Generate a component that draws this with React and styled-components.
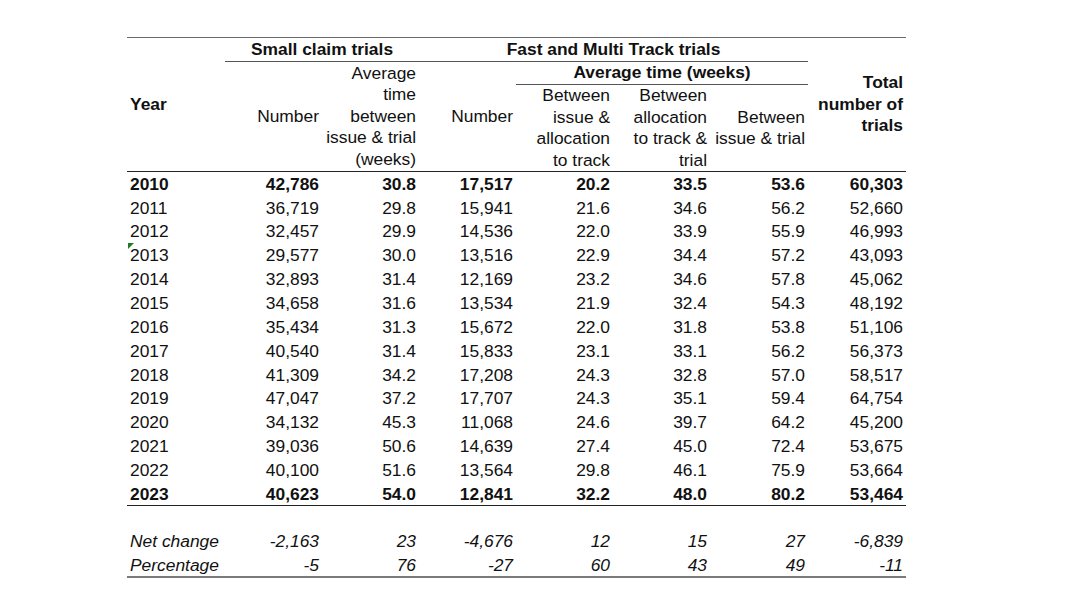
import React from 'react';
import styled, { createGlobalStyle, css } from 'styled-components';

const GlobalStyle = createGlobalStyle`
  html, body {
    margin: 0;
    padding: 0;
    background: #fff;
  }
  body {
    font-family: "Liberation Sans", Arial, sans-serif;
    color: #111;
  }
`;

const rows = [
  ['2010', '42,786', '30.8', '17,517', '20.2', '33.5', '53.6', '60,303'],
  ['2011', '36,719', '29.8', '15,941', '21.6', '34.6', '56.2', '52,660'],
  ['2012', '32,457', '29.9', '14,536', '22.0', '33.9', '55.9', '46,993'],
  ['2013', '29,577', '30.0', '13,516', '22.9', '34.4', '57.2', '43,093'],
  ['2014', '32,893', '31.4', '12,169', '23.2', '34.6', '57.8', '45,062'],
  ['2015', '34,658', '31.6', '13,534', '21.9', '32.4', '54.3', '48,192'],
  ['2016', '35,434', '31.3', '15,672', '22.0', '31.8', '53.8', '51,106'],
  ['2017', '40,540', '31.4', '15,833', '23.1', '33.1', '56.2', '56,373'],
  ['2018', '41,309', '34.2', '17,208', '24.3', '32.8', '57.0', '58,517'],
  ['2019', '47,047', '37.2', '17,707', '24.3', '35.1', '59.4', '64,754'],
  ['2020', '34,132', '45.3', '11,068', '24.6', '39.7', '64.2', '45,200'],
  ['2021', '39,036', '50.6', '14,639', '27.4', '45.0', '72.4', '53,675'],
  ['2022', '40,100', '51.6', '13,564', '29.8', '46.1', '75.9', '53,664'],
  ['2023', '40,623', '54.0', '12,841', '32.2', '48.0', '80.2', '53,464'],
];

const changes = [
  ['Net change', '-2,163', '23', '-4,676', '12', '15', '27', '-6,839'],
  ['Percentage', '-5', '76', '-27', '60', '43', '49', '-11'],
];

const colWidths = [98, 97, 97, 97, 97, 97, 98, 98];

const Page = styled.div`
  padding: 37px 0 0 127px;
`;

const Table = styled.table`
  width: 779px;
  table-layout: fixed;
  border-collapse: collapse;
  border-top: 1px solid #6a6a6a;
  border-bottom: 2px solid #7a7a7a;
  font-size: 17.4px;
`;

const Head = styled.thead`
  border-bottom: 1px solid #222;
`;

const HeadRow = styled.tr`
  height: ${(p) => p.$h}px;
`;

const HeadCell = styled.th`
  padding: 0 3px;
  font-weight: ${(p) => (p.$bold ? 700 : 400)};
  text-align: ${(p) => p.$align || 'right'};
  vertical-align: middle;
  line-height: 21.6px;
  white-space: nowrap;
  ${(p) =>
    p.$underline &&
    css`
      border-bottom: 1px solid #555;
    `}
`;

const Row = styled.tr`
  height: 23.85px;
  font-weight: ${(p) => (p.$bold ? 700 : 400)};
  font-style: ${(p) => (p.$italic ? 'italic' : 'normal')};
  ${(p) =>
    p.$rule &&
    css`
      border-bottom: 1px solid #222;
    `}
`;

const Cell = styled.td`
  padding: 0 3px;
  text-align: right;
  vertical-align: middle;
  line-height: 20px;
  white-space: nowrap;
`;

const LabelCell = styled(Cell)`
  position: relative;
  text-align: left;
  ${(p) =>
    p.$marker &&
    css`
      &::before {
        content: '';
        position: absolute;
        left: 1px;
        top: 0;
        border-top: 6px solid #1a7f24;
        border-right: 6px solid transparent;
      }
    `}
`;

export default function App() {
  return (
    <>
      <GlobalStyle />
      <Page>
        <Table>
          <colgroup>
            {colWidths.map((w, i) => (
              <col key={i} style={{ width: w }} />
            ))}
          </colgroup>
          <Head>
            <HeadRow $h={24}>
              <HeadCell rowSpan={3} $bold $align="left">Year</HeadCell>
              <HeadCell colSpan={2} $bold $align="center" $underline>
                Small claim trials
              </HeadCell>
              <HeadCell colSpan={4} $bold $align="center" $underline>
                Fast and Multi Track trials
              </HeadCell>
              <HeadCell rowSpan={3} $bold>
                Total
                <br />
                number of
                <br />
                trials
              </HeadCell>
            </HeadRow>
            <HeadRow $h={23}>
              <HeadCell rowSpan={2}>Number</HeadCell>
              <HeadCell rowSpan={2}>
                Average
                <br />
                time
                <br />
                between
                <br />
                issue &amp; trial
                <br />
                (weeks)
              </HeadCell>
              <HeadCell rowSpan={2}>Number</HeadCell>
              <HeadCell colSpan={3} $bold $align="center" $underline>
                Average time (weeks)
              </HeadCell>
            </HeadRow>
            <HeadRow $h={86}>
              <HeadCell>
                Between
                <br />
                issue &amp;
                <br />
                allocation
                <br />
                to track
              </HeadCell>
              <HeadCell>
                Between
                <br />
                allocation
                <br />
                to track &amp;
                <br />
                trial
              </HeadCell>
              <HeadCell>
                Between
                <br />
                issue &amp; trial
              </HeadCell>
            </HeadRow>
          </Head>
          <tbody>
            {rows.map((r, i) => (
              <Row
                key={r[0]}
                $bold={i === 0 || i === rows.length - 1}
                $rule={i === rows.length - 1}
              >
                <LabelCell $marker={r[0] === '2013'}>{r[0]}</LabelCell>
                {r.slice(1).map((v, j) => (
                  <Cell key={j}>{v}</Cell>
                ))}
              </Row>
            ))}
            <Row>
              <Cell colSpan={8} />
            </Row>
            {changes.map((r) => (
              <Row key={r[0]} $italic>
                <LabelCell>{r[0]}</LabelCell>
                {r.slice(1).map((v, j) => (
                  <Cell key={j}>{v}</Cell>
                ))}
              </Row>
            ))}
          </tbody>
        </Table>
      </Page>
    </>
  );
}
